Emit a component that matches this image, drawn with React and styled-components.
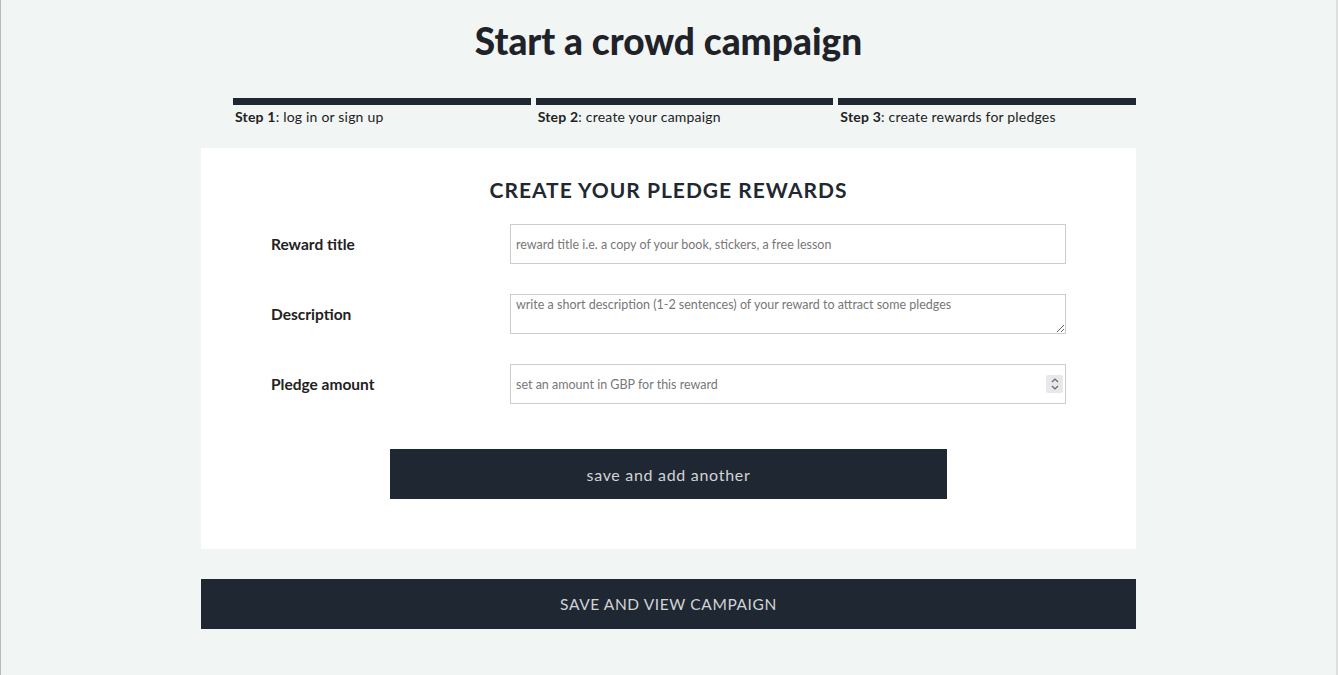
import styled, { createGlobalStyle } from "styled-components";

const GlobalStyle = createGlobalStyle`
	body {
		margin: 0;
		background-color: #f1f5f4;
		font-family: Lato, "Open Sans", sans-serif;
		color: #222831;
	}
	* {
		box-sizing: border-box;
	}
`;

const Page = styled.div`
	min-height: 100vh;
	border-left: 1px solid #b9b9b9;
	border-right: 2px solid #dedede;
`;

const Wrapper = styled.div`
	width: 935px;
	margin: 0 auto;
	padding-bottom: 40px;
`;

const Title = styled.h1`
	margin: 0;
	padding-top: 20px;
	font-size: 37px;
	line-height: 42px;
	font-weight: 900;
	text-align: center;
	color: #1f2329;
`;

const Steps = styled.div`
	margin: 36px 0 0 32px;
	display: grid;
	grid-template-columns: repeat(3, 1fr);
	gap: 5px;
`;

const Step = styled.div`
	display: flex;
	flex-direction: column;
`;

const StepBar = styled.div`
	height: 7px;
	background-color: #1f2733;
`;

const StepLabel = styled.div`
	margin-top: 4px;
	padding-left: 2px;
	font-size: 14px;
	line-height: 16px;
	letter-spacing: 0.2px;
	color: #222;
	b {
		font-weight: 700;
	}
`;

const Card = styled.div`
	margin-top: 23px;
	background-color: #ffffff;
	padding: 28px 70px 50px;
	display: flex;
	flex-direction: column;
`;

const CardTitle = styled.h2`
	margin: 0 0 20px;
	font-size: 21px;
	line-height: 28px;
	font-weight: 700;
	letter-spacing: 1px;
	text-align: center;
	color: #222831;
`;

const Row = styled.div`
	display: grid;
	grid-template-columns: 239px 1fr;
	align-items: center;
	margin-bottom: 30px;
	&:last-of-type {
		margin-bottom: 0;
	}
`;

const Label = styled.label`
	font-size: 15.5px;
	font-weight: 700;
	color: #222;
`;

const fieldStyle = `
	width: 100%;
	height: 40px;
	border: 1px solid #cccccc;
	border-radius: 0;
	background: #ffffff;
	font-family: Lato, "Open Sans", sans-serif;
	font-size: 12.5px;
	color: #333;
	outline: none;
	&::placeholder {
		color: #777777;
	}
`;

const Input = styled.input`
	${fieldStyle}
	padding: 0 5px;
	-moz-appearance: textfield;
	&::-webkit-inner-spin-button,
	&::-webkit-outer-spin-button {
		-webkit-appearance: none;
		margin: 0;
	}
`;

const TextArea = styled.textarea`
	${fieldStyle}
	display: block;
	padding: 2px 5px;
	resize: both;
`;

const FieldBox = styled.div`
	position: relative;
`;

const Spinner = styled.div`
	position: absolute;
	right: 3px;
	top: 11px;
	width: 17px;
	height: 18px;
	background-color: #e8e8ec;
	border-radius: 2px;
	display: flex;
	align-items: center;
	justify-content: center;
`;

const DarkButton = styled.button`
	display: block;
	width: ${(p) => (p.$wide ? "100%" : "557px")};
	height: 50px;
	margin: ${(p) => (p.$wide ? "30px 0 0" : "45px auto 0")};
	border: none;
	background-color: #1f2733;
	color: #d2d4d6;
	font-family: Lato, "Open Sans", sans-serif;
	font-size: ${(p) => (p.$wide ? "15.5px" : "16px")};
	letter-spacing: ${(p) => (p.$wide ? "0.6px" : "0.7px")};
	cursor: pointer;
`;

const steps = [
	["Step 1", "log in or sign up"],
	["Step 2", "create your campaign"],
	["Step 3", "create rewards for pledges"],
];

function App() {
	return (
		<Page>
			<GlobalStyle />
			<Wrapper>
				<Title>Start a crowd campaign</Title>
				<Steps>
					{steps.map((s) => (
						<Step key={s[0]}>
							<StepBar />
							<StepLabel>
								<b>{s[0]}</b>: {s[1]}
							</StepLabel>
						</Step>
					))}
				</Steps>
				<Card>
					<CardTitle>CREATE YOUR PLEDGE REWARDS</CardTitle>
					<Row>
						<Label>Reward title</Label>
						<Input type="text" placeholder="reward title i.e. a copy of your book, stickers, a free lesson" />
					</Row>
					<Row>
						<Label>Description</Label>
						<TextArea placeholder="write a short description (1-2 sentences) of your reward to attract some pledges" />
					</Row>
					<Row>
						<Label>Pledge amount</Label>
						<FieldBox>
							<Input type="number" placeholder="set an amount in GBP for this reward" />
							<Spinner>
								<svg width="10" height="14" viewBox="0 0 10 14" fill="none" stroke="#666" strokeWidth="1.2">
									<path d="M2 5 L5 2 L8 5" />
									<path d="M2 9 L5 12 L8 9" />
								</svg>
							</Spinner>
						</FieldBox>
					</Row>
					<DarkButton>save and add another</DarkButton>
				</Card>
				<DarkButton $wide>SAVE AND VIEW CAMPAIGN</DarkButton>
			</Wrapper>
		</Page>
	);
}

export default App;
